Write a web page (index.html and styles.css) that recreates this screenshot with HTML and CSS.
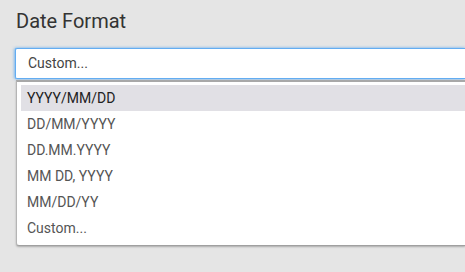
FILE: index.html
```html
<!DOCTYPE html>
<html lang="en">
<head>
  <meta charset="UTF-8">
  <title>Date Format</title>
  <link rel="stylesheet" href="styles.css">
</head>
<body>
  <div class="field">
    <h1>Date Format</h1>
    <div class="select">Custom...</div>
    <ul class="options">
      <li class="active">YYYY/MM/DD</li>
      <li>DD/MM/YYYY</li>
      <li>DD.MM.YYYY</li>
      <li>MM DD, YYYY</li>
      <li>MM/DD/YY</li>
      <li>Custom...</li>
    </ul>
  </div>
</body>
</html>
```

FILE: styles.css
```css
* {
  margin: 0;
  padding: 0;
  box-sizing: border-box;
}
html, body {
  height: 100%;
  overflow: hidden;
}
body {
  font-family: Roboto, "Liberation Sans", sans-serif;
  background-color: #e5e5e5;
  color: #333;
  padding: 9px 0 0 15px;
}
h1 {
  font-size: 20px;
  font-weight: 400;
  line-height: 24px;
  color: #333;
  margin: 0 0 15px 1px;
}
.select {
  height: 31px;
  background: #fff;
  border: 1px solid #63adf2;
  border-right: none;
  border-radius: 2px 0 0 2px;
  box-shadow: -1px 0 3px rgba(99, 173, 242, 0.6), 0 0 3px rgba(99, 173, 242, 0.6);
  font-size: 14px;
  line-height: 29px;
  padding-left: 12px;
  color: #444;
}
.options {
  list-style: none;
  margin: 1px 0 0 1px;
  background: #fff;
  border-top: 2px solid #a8a8a8;
  border-left: 1px solid #b5b5b5;
  border-bottom: 1px solid #a0a0a0;
  border-radius: 0 0 0 3px;
  box-shadow: 0 1px 2px rgba(0, 0, 0, 0.25);
  padding: 3px 0 4px 4px;
}
.options li {
  height: 26px;
  line-height: 26px;
  font-size: 14px;
  padding-left: 6px;
  color: #555;
}
.options li.active {
  background: #e1e0e5;
  color: #222;
}
```
